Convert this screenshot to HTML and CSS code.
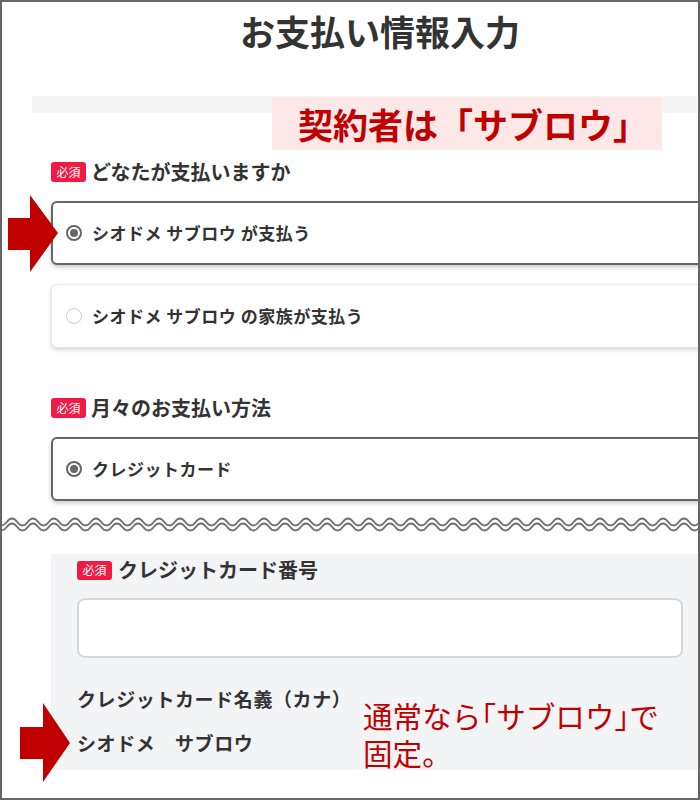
FILE: index.html
```html
<!DOCTYPE html>
<html lang="ja">
<head>
<meta charset="utf-8">
<title>お支払い情報入力</title>
<link rel="stylesheet" href="styles.css">
</head>
<body>
<div class="frame">
  <div class="page">
    <h1 class="title">お支払い情報入力</h1>
    <div class="bar"></div>
    <div class="form">
      <div class="label first"><span class="badge">必須</span>どなたが支払いますか</div>
      <div class="card selected"><span class="radio on"></span><span class="opt">シオドメ サブロウ が支払う</span></div>
      <div class="card"><span class="radio"></span><span class="opt">シオドメ サブロウ の家族が支払う</span></div>
      <div class="label second"><span class="badge">必須</span>月々のお支払い方法</div>
      <div class="card selected"><span class="radio on"></span><span class="opt">クレジットカード</span></div>
    </div>
  </div>

  <svg class="wave" width="696" height="22" viewBox="0 0 696 22">
    <defs>
      <path id="w" d="M-16.25 8q5.25 -7 10.5 0t10.5 0t10.5 0t10.5 0t10.5 0t10.5 0t10.5 0t10.5 0t10.5 0t10.5 0t10.5 0t10.5 0t10.5 0t10.5 0t10.5 0t10.5 0t10.5 0t10.5 0t10.5 0t10.5 0t10.5 0t10.5 0t10.5 0t10.5 0t10.5 0t10.5 0t10.5 0t10.5 0t10.5 0t10.5 0t10.5 0t10.5 0t10.5 0t10.5 0t10.5 0t10.5 0t10.5 0t10.5 0t10.5 0t10.5 0t10.5 0t10.5 0t10.5 0t10.5 0t10.5 0t10.5 0t10.5 0t10.5 0t10.5 0t10.5 0t10.5 0t10.5 0t10.5 0t10.5 0t10.5 0t10.5 0t10.5 0t10.5 0t10.5 0t10.5 0t10.5 0t10.5 0t10.5 0t10.5 0t10.5 0t10.5 0t10.5 0t10.5 0t10.5 0t10.5 0t10.5 0t10.5 0t10.5 0"/>
    </defs>
    <use href="#w" class="wline"/>
    <use href="#w" class="wline" y="5"/>
  </svg>

  <div class="page">
    <div class="form">
      <section class="panel">
        <div class="label small"><span class="badge">必須</span>クレジットカード番号</div>
        <div class="input"></div>
        <div class="field-name">クレジットカード名義（カナ）</div>
        <div class="field-value">シオドメ　サブロウ</div>
      </section>
    </div>
  </div>

  <div class="callout">契約者は「サブロウ」</div>
  <div class="note">通常なら<span class="half">「</span>サブロウ<span class="half">」</span>で<br>固定。</div>

  <svg class="arrow arrow-top" width="50" height="77" viewBox="0 0 50 77">
    <polygon points="0,23 22,23 22,0 50,38 22,77 22,55 0,55"/>
  </svg>
  <svg class="arrow arrow-bottom" width="50" height="79" viewBox="0 0 50 79">
    <polygon points="0,24 23,24 23,0 50,40 23,79 23,56 0,56"/>
  </svg>
</div>
</body>
</html>
```

FILE: styles.css
```css
html, body {
  margin: 0;
  padding: 0;
  background: #ffffff;
}

body {
  font-family: "Noto Sans CJK JP", "Noto Sans", sans-serif;
  color: #333333;
}

.frame {
  position: relative;
  width: 700px;
  height: 800px;
  box-sizing: border-box;
  border: 2px solid #666666;
  overflow: hidden;
  background: #ffffff;
}

.page {
  margin-left: 30px;
  width: 696px;
}

.title {
  margin: 4px 0 0;
  font-size: 35px;
  line-height: 50px;
  font-weight: 700;
  text-align: center;
  color: #333333;
}

.bar {
  margin-top: 40px;
  height: 17px;
  background: #f5f5f5;
}

.form {
  padding: 0 19px;
}

.label {
  display: flex;
  align-items: center;
  height: 20px;
  font-size: 20px;
  line-height: 20px;
  font-weight: 700;
  color: #333333;
}

.label.first {
  margin-top: 49px;
}

.label.second {
  margin-top: 50px;
}

.badge {
  display: flex;
  align-items: center;
  justify-content: center;
  width: 35px;
  height: 20px;
  margin-right: 5px;
  border-radius: 3px;
  background: #f01a43;
  color: #ffffff;
  font-size: 12px;
  font-weight: 400;
  line-height: 1;
}

.card {
  display: flex;
  align-items: center;
  height: 64px;
  margin-top: 19px;
  box-sizing: border-box;
  padding-left: 14px;
  border: 1px solid #e6e6e6;
  border-radius: 6px;
  background: #ffffff;
  box-shadow: 0 2px 4px rgba(0, 0, 0, 0.16);
}

.card.selected {
  padding-left: 13px;
  border: 2px solid #666666;
  box-shadow: 0 2px 4px rgba(0, 0, 0, 0.22);
}

.radio {
  position: relative;
  flex: none;
  width: 16px;
  height: 16px;
  box-sizing: border-box;
  border: 1.5px solid #cccccc;
  border-radius: 50%;
  margin-right: 10px;
}

.radio.on {
  border: 2px solid #666666;
}

.radio.on::after {
  content: "";
  position: absolute;
  left: 2px;
  top: 2px;
  width: 8px;
  height: 8px;
  border-radius: 50%;
  background: #666666;
}

.opt {
  font-size: 17px;
  line-height: 20px;
  font-weight: 700;
  letter-spacing: 0.5px;
  color: #333333;
  white-space: nowrap;
}

.wave {
  display: block;
  margin-top: 13px;
}

.wline {
  fill: none;
  stroke: #707070;
  stroke-width: 1.8;
}

.panel {
  margin-top: 18px;
  padding: 6px 26px 17px;
  background: #f3f4f6;
}

.label.small .badge {
  height: 19px;
  margin-right: 6px;
}

.input {
  height: 60px;
  margin-top: 18px;
  box-sizing: border-box;
  border: 2px solid #d4d6da;
  border-radius: 8px;
  background: #ffffff;
}

.field-name,
.field-value {
  width: fit-content;
  font-size: 19px;
  line-height: 20px;
  font-weight: 700;
  letter-spacing: 0.6px;
  color: #333333;
  white-space: nowrap;
}

.field-name {
  margin-top: 31px;
}

.field-value {
  margin-top: 24px;
}

.callout {
  position: absolute;
  left: 270px;
  top: 95px;
  width: 390px;
  height: 53px;
  box-sizing: border-box;
  padding-left: 26px;
  display: flex;
  align-items: center;
  background: #fde7e7;
  color: #c00000;
  font-size: 35px;
  font-weight: 700;
  line-height: 1;
  white-space: nowrap;
}

.note {
  position: absolute;
  left: 361px;
  top: 695px;
  font-size: 29.6px;
  line-height: 37px;
  font-weight: 400;
  color: #c00000;
  white-space: nowrap;
}

.half {
  font-feature-settings: "halt" 1;
}

.arrow {
  position: absolute;
  fill: #c00000;
}

.arrow-top {
  left: 6px;
  top: 193px;
}

.arrow-bottom {
  left: 18px;
  top: 701px;
}
```
